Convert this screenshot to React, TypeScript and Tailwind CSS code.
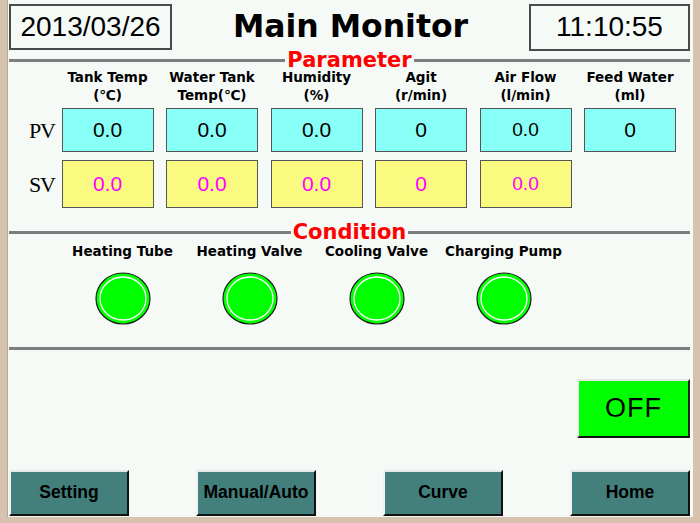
import React from "react"

const columns: { title: string; unit: string; pv: string; sv?: string; small?: boolean }[] = [
  { title: "Tank Temp", unit: "(℃)", pv: "0.0", sv: "0.0" },
  { title: "Water Tank", unit: "Temp(℃)", pv: "0.0", sv: "0.0" },
  { title: "Humidity", unit: "(%)", pv: "0.0", sv: "0.0" },
  { title: "Agit", unit: "(r/min)", pv: "0", sv: "0" },
  { title: "Air Flow", unit: "(l/min)", pv: "0.0", sv: "0.0", small: true },
  { title: "Feed Water", unit: "(ml)", pv: "0" },
]

const conditions = ["Heating Tube", "Heating Valve", "Cooling Valve", "Charging Pump"]

const navButtons = ["Setting", "Manual/Auto", "Curve", "Home"]

const SectionTitle = ({ title }: { title: string }) => (
  <div className="flex h-[20px] items-center">
    <div className="h-[3px] flex-1 bg-[#7d7d7d]" />
    <span className="px-[2px] font-['DejaVu_Sans',sans-serif] text-[21px] font-bold leading-[20px] text-[#ff0000]">
      {title}
    </span>
    <div className="h-[3px] flex-1 bg-[#7d7d7d]" />
  </div>
)

const Lamp = () => (
  <svg width="56" height="53" viewBox="0 0 56 53">
    <ellipse cx="28" cy="26.5" rx="27" ry="25.5" fill="#00ff00" stroke="#1c1c1c" strokeWidth="1.2" />
    <ellipse cx="28" cy="26.5" rx="23" ry="21.5" fill="none" stroke="#ffffff" strokeWidth="1.3" />
  </svg>
)

const RowLabel = ({ text }: { text: string }) => (
  <div className="flex items-center justify-end">
    <span className="-mr-[6px] font-['Liberation_Serif',serif] text-[22px] tracking-[-1px]">{text}</span>
  </div>
)

const rowGrid = "grid grid-cols-[40px_repeat(6,92px)] gap-x-[12.5px]"

export default function App() {
  return (
    <div className="flex h-[523px] w-[700px] bg-[#d5c3b0] font-['Liberation_Sans',Arial,sans-serif] text-black">
      <div className="ml-[7px] flex h-[517px] w-[686px] flex-col border-l border-[#b6a796] bg-[#f6faf7] pl-[1px] pr-[3px]">
        {/* top bar: date, title, clock */}
        <div className="mt-[4px] flex h-[46px] items-center justify-between">
          <div className="flex h-[46px] w-[163px] items-center justify-center border-2 border-[#4a4a4a] text-[28px] leading-none">
            2013/03/26
          </div>
          <div className="font-['DejaVu_Sans',sans-serif] text-[31.5px] font-bold leading-none">Main Monitor</div>
          <div className="flex h-[47px] w-[161px] items-center justify-center border-2 border-[#4a4a4a] text-[28px] leading-none">
            11:10:55
          </div>
        </div>

        <SectionTitle title="Parameter" />

        <div className={`${rowGrid} -mt-[2px] font-['DejaVu_Sans',sans-serif] text-[13.5px] font-bold leading-[18px]`}>
          <div />
          {columns.map(c => (
            <div key={c.title} className="whitespace-nowrap text-center">
              <div>{c.title}</div>
              <div>{c.unit}</div>
            </div>
          ))}
        </div>

        <div className={`${rowGrid} mt-[4px] h-[44px]`}>
          <RowLabel text="PV" />
          {columns.map(c => (
            <div
              key={c.title}
              className={`flex items-center justify-center border border-[#555] bg-[#88fff7] ${c.small ? "text-[19px]" : "text-[21px]"}`}
            >
              {c.pv}
            </div>
          ))}
        </div>

        <div className={`${rowGrid} mt-[8px] h-[48px]`}>
          <RowLabel text="SV" />
          {columns.map(c =>
            c.sv ? (
              <div
                key={c.title}
                className={`flex items-center justify-center border border-[#555] bg-[#fafa80] text-[#ff00ff] ${c.small ? "text-[19px]" : "text-[21px]"}`}
              >
                {c.sv}
              </div>
            ) : (
              <div key={c.title} />
            )
          )}
        </div>

        <div className="mt-[14px]">
          <SectionTitle title="Condition" />
        </div>

        <div className="flex pl-[50px] font-['DejaVu_Sans',sans-serif] text-[13.5px] font-bold leading-[18px]">
          {conditions.map(name => (
            <div key={name} className="w-[127px] whitespace-nowrap text-center">
              {name}
            </div>
          ))}
        </div>

        <div className="mt-[12px] flex h-[52px] pl-[50px]">
          {conditions.map(name => (
            <div key={name} className="flex w-[127px] justify-center">
              <Lamp />
            </div>
          ))}
        </div>

        <div className="mt-[23px] h-[3px] bg-[#7d7d7d]" />

        <div className="mt-[29px] flex justify-end">
          <button className="flex h-[59px] w-[113px] items-center justify-center border-2 border-b-[#111] border-l-[#f0f0f0] border-r-[#222] border-t-[#e6e6e6] bg-[#00ff00] text-[27px] leading-none tracking-[1px]">
            OFF
          </button>
        </div>

        <div className="mt-[32px] flex justify-between">
          {navButtons.map(label => (
            <button
              key={label}
              className="flex h-[46px] w-[120px] items-center justify-center border-2 border-b-[#111] border-l-[#f2f2f2] border-r-[#111] border-t-[#e8e8e8] bg-[#437f7b] text-[17.5px] font-bold leading-none"
            >
              {label}
            </button>
          ))}
        </div>
      </div>
    </div>
  )
}
